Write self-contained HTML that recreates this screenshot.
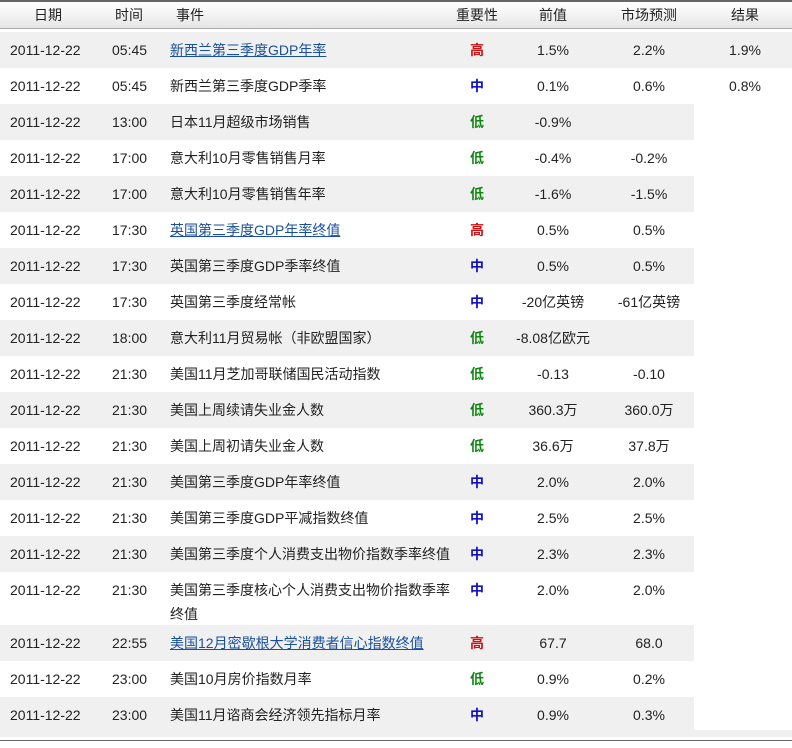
<!DOCTYPE html>
<html><head><meta charset="utf-8"><style>
body{margin:0;width:792px;height:748px;background:#fff;font-family:"Liberation Sans","Noto Sans CJK SC",sans-serif;font-size:14px;color:#222;position:relative;overflow:hidden}
.hd{position:absolute;left:0;top:0;width:792px;height:29px;border-top:2px solid #666;border-bottom:1px solid #aaa;box-sizing:border-box;background:linear-gradient(#fff,#e6e6e6)}
.hd span{position:absolute;top:0;line-height:27px}
.r{position:absolute;left:0;height:36px;width:792px}
.r span{position:absolute;top:0;line-height:36px;white-space:nowrap}
.g{background:linear-gradient(90deg,#f0f0f0 0,#f0f0f0 694px,#fff 694px)}
.gf{background:#f0f0f0}
.d{left:10px}.t{left:112px}.e{left:170px}
.i{left:470px;font-weight:bold}
.p{left:513px;width:80px;text-align:center}
.f{left:609px;width:80px;text-align:center}
.x{left:705px;width:80px;text-align:center}
a{color:#1a4f9c;text-decoration:underline}
.H{color:#d01010}.M{color:#1010c0}.L{color:#118811}
</style></head><body>
<div class="hd"><span style="left:34px">日期</span><span style="left:115px">时间</span><span style="left:176px">事件</span><span style="left:456px">重要性</span><span style="left:539px">前值</span><span style="left:621px">市场预测</span><span style="left:731px">结果</span></div>

<div class="r gf" style="top:32px"><span class="d">2011-12-22</span><span class="t">05:45</span><span class="e"><a>新西兰第三季度GDP年率</a></span><span class="i H">高</span><span class="p">1.5%</span><span class="f">2.2%</span><span class="x">1.9%</span></div>
<div class="r" style="top:68px"><span class="d">2011-12-22</span><span class="t">05:45</span><span class="e">新西兰第三季度GDP季率</span><span class="i M">中</span><span class="p">0.1%</span><span class="f">0.6%</span><span class="x">0.8%</span></div>
<div class="r g" style="top:104px"><span class="d">2011-12-22</span><span class="t">13:00</span><span class="e">日本11月超级市场销售</span><span class="i L">低</span><span class="p">-0.9%</span><span class="f"></span></div>
<div class="r" style="top:140px"><span class="d">2011-12-22</span><span class="t">17:00</span><span class="e">意大利10月零售销售月率</span><span class="i L">低</span><span class="p">-0.4%</span><span class="f">-0.2%</span></div>
<div class="r g" style="top:176px"><span class="d">2011-12-22</span><span class="t">17:00</span><span class="e">意大利10月零售销售年率</span><span class="i L">低</span><span class="p">-1.6%</span><span class="f">-1.5%</span></div>
<div class="r" style="top:212px"><span class="d">2011-12-22</span><span class="t">17:30</span><span class="e"><a>英国第三季度GDP年率终值</a></span><span class="i H">高</span><span class="p">0.5%</span><span class="f">0.5%</span></div>
<div class="r g" style="top:248px"><span class="d">2011-12-22</span><span class="t">17:30</span><span class="e">英国第三季度GDP季率终值</span><span class="i M">中</span><span class="p">0.5%</span><span class="f">0.5%</span></div>
<div class="r" style="top:284px"><span class="d">2011-12-22</span><span class="t">17:30</span><span class="e">英国第三季度经常帐</span><span class="i M">中</span><span class="p">-20亿英镑</span><span class="f">-61亿英镑</span></div>
<div class="r g" style="top:320px"><span class="d">2011-12-22</span><span class="t">18:00</span><span class="e">意大利11月贸易帐（非欧盟国家）</span><span class="i L">低</span><span class="p">-8.08亿欧元</span></div>
<div class="r" style="top:356px"><span class="d">2011-12-22</span><span class="t">21:30</span><span class="e">美国11月芝加哥联储国民活动指数</span><span class="i L">低</span><span class="p">-0.13</span><span class="f">-0.10</span></div>
<div class="r g" style="top:392px"><span class="d">2011-12-22</span><span class="t">21:30</span><span class="e">美国上周续请失业金人数</span><span class="i L">低</span><span class="p">360.3万</span><span class="f">360.0万</span></div>
<div class="r" style="top:428px"><span class="d">2011-12-22</span><span class="t">21:30</span><span class="e">美国上周初请失业金人数</span><span class="i L">低</span><span class="p">36.6万</span><span class="f">37.8万</span></div>
<div class="r g" style="top:464px"><span class="d">2011-12-22</span><span class="t">21:30</span><span class="e">美国第三季度GDP年率终值</span><span class="i M">中</span><span class="p">2.0%</span><span class="f">2.0%</span></div>
<div class="r" style="top:500px"><span class="d">2011-12-22</span><span class="t">21:30</span><span class="e">美国第三季度GDP平减指数终值</span><span class="i M">中</span><span class="p">2.5%</span><span class="f">2.5%</span></div>
<div class="r g" style="top:536px"><span class="d">2011-12-22</span><span class="t">21:30</span><span class="e">美国第三季度个人消费支出物价指数季率终值</span><span class="i M">中</span><span class="p">2.3%</span><span class="f">2.3%</span></div>
<div class="r" style="top:572px;height:53px"><span class="d">2011-12-22</span><span class="t">21:30</span><span class="e" style="line-height:24px;top:6px">美国第三季度核心个人消费支出物价指数季率<br>终值</span><span class="i M">中</span><span class="p">2.0%</span><span class="f">2.0%</span></div>
<div class="r g" style="top:625px"><span class="d">2011-12-22</span><span class="t">22:55</span><span class="e"><a>美国12月密歇根大学消费者信心指数终值</a></span><span class="i H">高</span><span class="p">67.7</span><span class="f">68.0</span></div>
<div class="r" style="top:661px"><span class="d">2011-12-22</span><span class="t">23:00</span><span class="e">美国10月房价指数月率</span><span class="i L">低</span><span class="p">0.9%</span><span class="f">0.2%</span></div>
<div class="r g" style="top:697px;height:40px"><span class="d">2011-12-22</span><span class="t">23:00</span><span class="e">美国11月谘商会经济领先指标月率</span><span class="i M">中</span><span class="p">0.9%</span><span class="f">0.3%</span></div>
<div style="position:absolute;left:694px;top:730px;width:98px;height:7px;background:#f0f0f0"></div>
<div style="position:absolute;left:0;top:740px;width:792px;height:1px;background:#666"></div>
</body></html>
